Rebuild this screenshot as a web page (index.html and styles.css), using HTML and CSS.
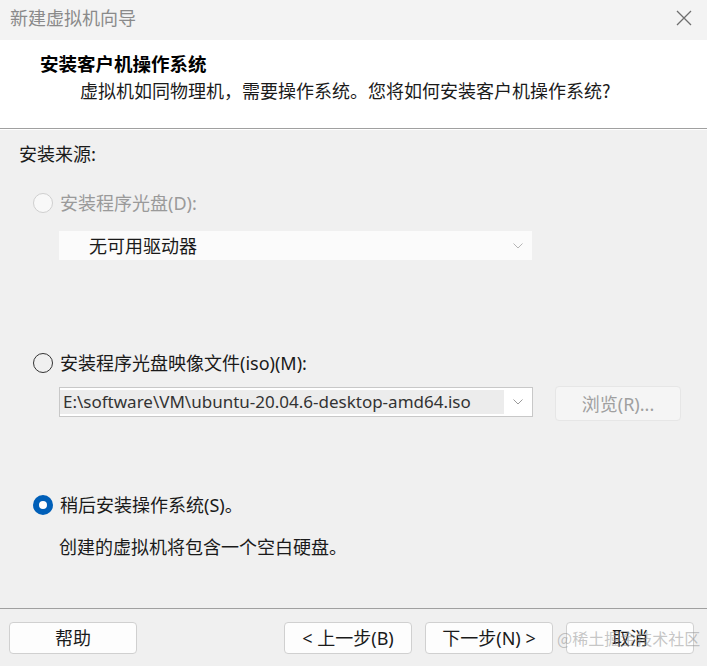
FILE: index.html
```html
<!DOCTYPE html>
<html lang="zh-CN">
<head>
<meta charset="utf-8">
<title>新建虚拟机向导</title>
<link rel="stylesheet" href="styles.css">
</head>
<body>
<div class="window">
  <div class="titlebar">
    <span class="title">新建虚拟机向导</span>
    <span class="close">
      <svg width="16" height="16" viewBox="0 0 16 16"><path d="M1 1 L15 15 M15 1 L1 15" stroke="#6e6e6e" stroke-width="1.3" fill="none"/></svg>
    </span>
  </div>
  <div class="header">
    <div class="h-title">安装客户机操作系统</div>
    <div class="h-sub">虚拟机如同物理机，需要操作系统。您将如何安装客户机操作系统?</div>
  </div>
  <div class="content">
    <div class="section-label">安装来源:</div>
    <div class="radio-row disabled r1"><span class="radio"></span><span class="label">安装程序光盘(D):</span></div>
    <div class="combo combo-disabled">
      <span class="combo-text">无可用驱动器</span>
      <svg class="chev" width="10" height="6" viewBox="0 0 10 6"><path d="M0.5 0.5 L5 5 L9.5 0.5" stroke="#b5b5b5" stroke-width="1" fill="none"/></svg>
    </div>
    <div class="radio-row r2"><span class="radio"></span><span class="label">安装程序光盘映像文件(iso)(M):</span></div>
    <div class="iso-row">
      <div class="combo combo-iso">
        <span class="combo-sel">E:\software\VM\ubuntu-20.04.6-desktop-amd64.iso</span>
        <svg class="chev" width="10" height="6" viewBox="0 0 10 6"><path d="M0.5 0.5 L5 5 L9.5 0.5" stroke="#9a9a9a" stroke-width="1" fill="none"/></svg>
      </div>
      <div class="btn browse">浏览(R)...</div>
    </div>
    <div class="radio-row r3"><span class="radio checked"></span><span class="label">稍后安装操作系统(S)。</span></div>
    <div class="desc">创建的虚拟机将包含一个空白硬盘。</div>
  </div>
  <div class="footer">
    <div class="btn">帮助</div>
    <div class="spacer"></div>
    <div class="btn">&lt; 上一步(B)</div>
    <div class="btn">下一步(N) &gt;</div>
    <div class="btn">取消</div>
    <span class="watermark">@稀土掘金技术社区</span>
  </div>
</div>
</body>
</html>
```
FILE: styles.css
```css
html, body {
  margin: 0;
  padding: 0;
}
body {
  background: #f0f0f0;
  font-family: "Noto Sans", "Noto Sans CJK SC", sans-serif;
  font-size: 18px;
  color: #1a1a1a;
}
.window {
  width: 707px;
  height: 666px;
  display: flex;
  flex-direction: column;
  overflow: hidden;
}
.titlebar {
  height: 40px;
  background: #f3f3f3;
  display: flex;
  align-items: center;
  justify-content: space-between;
  padding: 0 15px 0 10px;
  box-sizing: border-box;
  flex: none;
}
.title {
  font-family: "Noto Sans CJK SC", sans-serif;
  color: #8a8a8a;
  font-size: 18px;
  line-height: 24px;
  margin-top: -6px;
}
.close {
  display: flex;
  margin-top: -4px;
}
.header {
  height: 89px;
  background: #ffffff;
  box-sizing: border-box;
  padding: 11px 0 0 40px;
  border-bottom: 1px solid #a0a0a0;
  box-shadow: 0 1px 0 #ffffff;
  flex: none;
}
.h-title {
  font-family: "Noto Sans CJK SC", sans-serif;
  font-weight: 700;
  font-size: 18.5px;
  line-height: 24px;
  color: #000;
}
.h-sub {
  font-family: "Noto Sans CJK SC", sans-serif;
  font-size: 18px;
  line-height: 24px;
  margin: 3px 0 0 40px;
  color: #1a1a1a;
}
.content {
  height: 479px;
  box-sizing: border-box;
  padding: 12px 18px 0 18px;
  flex: none;
}
.section-label {
  font-family: "Noto Sans CJK SC", sans-serif;
  line-height: 24px;
  margin-left: 1px;
}
.radio-row {
  display: flex;
  align-items: center;
  height: 24px;
  margin-left: 15px;
  gap: 7px;
}
.label {
  line-height: 24px;
}
.radio {
  width: 20px;
  height: 20px;
  box-sizing: border-box;
  border-radius: 50%;
  border: 1px solid #333;
  background: #f0f0f0;
  flex: none;
}
.disabled {
  color: #9a9a9a;
}
.disabled .radio {
  border-color: #cfcfcf;
  background: #f8f8f8;
}
.radio.checked {
  border: 6.5px solid #005fb8;
  background: #ffffff;
}
.r1 { margin-top: 26px; }
.r2 { margin-top: 91px; }
.r3 { margin-top: 72px; }
.combo {
  display: flex;
  align-items: center;
  box-sizing: border-box;
  margin-left: 41px;
}
.combo-disabled {
  width: 473px;
  height: 29px;
  margin-top: 16px;
  background: #fbfbfb;
  padding-left: 30px;
}
.combo-text {
  line-height: 24px;
  color: #1a1a1a;
}
.chev {
  margin-left: auto;
  margin-right: 9px;
  flex: none;
}
.iso-row {
  display: flex;
  align-items: flex-start;
  margin-top: 11px;
}
.combo-iso {
  width: 474px;
  height: 30px;
  margin-top: 1px;
  border: 1px solid #c8c8c8;
  background: #ffffff;
  padding: 2px 0 2px 0;
  align-items: stretch;
}
.combo-sel {
  width: 444px;
  background: #ececec;
  color: #333;
  font-size: 17px;
  line-height: 24px;
  padding-left: 3px;
  box-sizing: border-box;
  white-space: nowrap;
  overflow: hidden;
}
.combo-iso .chev {
  align-self: center;
}
.btn {
  width: 128px;
  height: 32px;
  box-sizing: border-box;
  border: 1px solid #d0d0d0;
  border-radius: 4px;
  background: #fdfdfd;
  display: flex;
  align-items: center;
  justify-content: center;
  line-height: 24px;
  flex: none;
}
.browse {
  width: 126px;
  height: 35px;
  margin-left: 22px;
  background: #f5f5f5;
  border-color: #e6e6e6;
  color: #a0a0a0;
}
.desc {
  line-height: 24px;
  margin: 18px 0 0 41px;
}
.footer {
  position: relative;
  flex: none;
  height: 58px;
  box-sizing: border-box;
  border-top: 1px solid #a0a0a0;
  display: flex;
  align-items: flex-start;
  padding: 13px 13px 0 9px;
  gap: 13px;
}
.spacer {
  flex: 1;
}
.watermark {
  position: absolute;
  left: 557px;
  top: 18px;
  font-family: "Noto Sans CJK SC", sans-serif;
  font-size: 16px;
  line-height: 22px;
  color: rgba(150, 150, 150, 0.55);
  white-space: nowrap;
}
```
